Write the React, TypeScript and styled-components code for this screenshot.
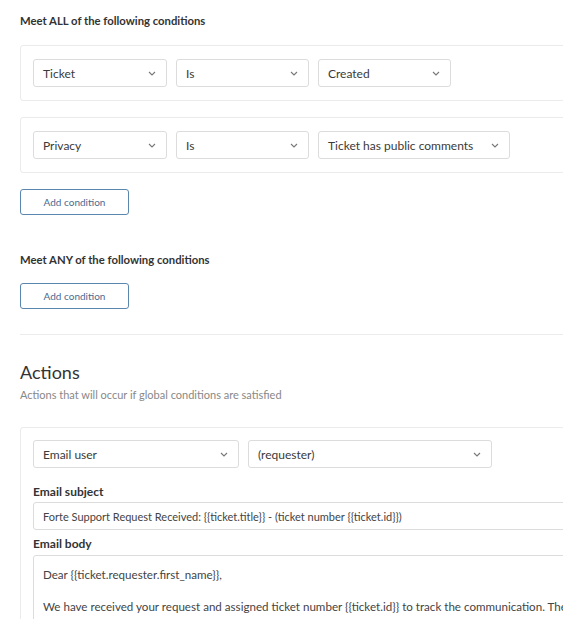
import React from "react";
import styled, { createGlobalStyle } from "styled-components";

const GlobalStyle = createGlobalStyle`
  html, body {
    margin: 0;
    padding: 0;
    background: #fff;
    overflow: hidden;
  }
  body {
    font-family: Lato, "Open Sans", sans-serif;
    color: #333;
  }
`;

interface Condition {
  field: string;
  operator: string;
  value: string;
  valueWidth?: number;
}

const allConditions: Condition[] = [
  { field: "Ticket", operator: "Is", value: "Created", valueWidth: 133 },
  { field: "Privacy", operator: "Is", value: "Ticket has public comments" }
];

function Chevron() {
  return (
    <svg width="8" height="5" viewBox="0 0 8 5" aria-hidden="true">
      <path d="M1 1l3 3 3-3" fill="none" stroke="#777" strokeWidth="1.1" />
    </svg>
  );
}

function Select({ value, width }: { value: string; width?: number }) {
  return (
    <SelectBox style={width ? { width } : undefined}>
      <SelectText>{value}</SelectText>
      <Chevron />
    </SelectBox>
  );
}

export default function App() {
  return (
    <>
      <GlobalStyle />
      <Page>
        <SectionLabel>Meet ALL of the following conditions</SectionLabel>
        {allConditions.map(c => (
          <ConditionCard key={c.field}>
            <Select value={c.field} width={134} />
            <Select value={c.operator} width={133} />
            <Select value={c.value} width={c.valueWidth} />
          </ConditionCard>
        ))}
        <AddButton $top={1}>Add condition</AddButton>

        <SectionLabel $top={37} $bottom={15}>
          Meet ANY of the following conditions
        </SectionLabel>
        <AddButton>Add condition</AddButton>

        <Divider />

        <ActionsTitle>Actions</ActionsTitle>
        <ActionsHint>Actions that will occur if global conditions are satisfied</ActionsHint>

        <ActionCard>
          <SelectRow>
            <Select value="Email user" width={206} />
            <Select value="(requester)" width={244} />
          </SelectRow>
          <FieldLabel $top={16} $bottom={2}>Email subject</FieldLabel>
          <TextInput>
            Forte Support Request Received: {"{{ticket.title}}"} - (ticket number {"{{ticket.id}}"})
          </TextInput>
          <FieldLabel $top={6} $bottom={3}>Email body</FieldLabel>
          <TextArea>
            <p>Dear {"{{ticket.requester.first_name}}"},</p>
            <p>
              We have received your request and assigned ticket number {"{{ticket.id}}"} to track the communication. The
            </p>
          </TextArea>
        </ActionCard>
      </Page>
    </>
  );
}

const Page = styled.div`
  width: 640px;
  padding: 13px 0 0 20px;
`;

const SectionLabel = styled.div<{ $top?: number; $bottom?: number }>`
  font-size: 11.3px;
  font-weight: 700;
  line-height: 16px;
  color: #333;
  margin-top: ${p => p.$top ?? 0}px;
  margin-bottom: ${p => p.$bottom ?? 16}px;
`;

const ConditionCard = styled.div`
  display: flex;
  gap: 9px;
  border: 1px solid #ebebeb;
  border-radius: 3px;
  padding: 13px 12px;
  margin-bottom: 16px;
`;

const SelectRow = styled.div`
  display: flex;
  gap: 9px;
`;

const SelectBox = styled.div`
  box-sizing: border-box;
  height: 28px;
  display: flex;
  align-items: center;
  justify-content: space-between;
  gap: 18px;
  padding: 0 10px 0 9px;
  border: 1px solid #dcdcdc;
  border-radius: 3px;
  background: #fff;
  font-size: 12px;
  color: #3a3a3a;
`;

const SelectText = styled.span`
  white-space: nowrap;
`;

const AddButton = styled.button<{ $top?: number }>`
  display: block;
  box-sizing: border-box;
  width: 109px;
  height: 26px;
  margin-top: ${p => p.$top ?? 0}px;
  padding: 0;
  border: 1px solid #5a87ad;
  border-radius: 3px;
  background: #fff;
  color: #4a6a90;
  font-family: inherit;
  font-size: 10px;
`;

const Divider = styled.div`
  height: 1px;
  background: #ececec;
  margin: 25px 0 26px;
`;

const ActionsTitle = styled.div`
  font-size: 18px;
  line-height: 22px;
  color: #333;
`;

const ActionsHint = styled.div`
  font-size: 11px;
  line-height: 16px;
  color: #888;
  margin-top: 4px;
  margin-bottom: 24px;
`;

const ActionCard = styled.div`
  border: 1px solid #ebebeb;
  border-radius: 3px;
  padding: 12px;
  height: 240px;
`;

const FieldLabel = styled.div<{ $top: number; $bottom: number }>`
  font-size: 12px;
  font-weight: 700;
  line-height: 16px;
  margin: ${p => p.$top}px 0 ${p => p.$bottom}px;
`;

const TextInput = styled.div`
  box-sizing: border-box;
  height: 28px;
  display: flex;
  align-items: center;
  padding: 0 9px;
  border: 1px solid #dcdcdc;
  border-radius: 3px;
  font-size: 11px;
  color: #444;
  white-space: nowrap;
`;

const TextArea = styled.div`
  box-sizing: border-box;
  padding: 10px 9px;
  border: 1px solid #dcdcdc;
  border-radius: 3px;
  font-size: 11.6px;
  color: #444;
  height: 120px;
  white-space: nowrap;
  overflow: hidden;

  p {
    margin: 0 0 14px;
    line-height: 18px;
  }
`;
